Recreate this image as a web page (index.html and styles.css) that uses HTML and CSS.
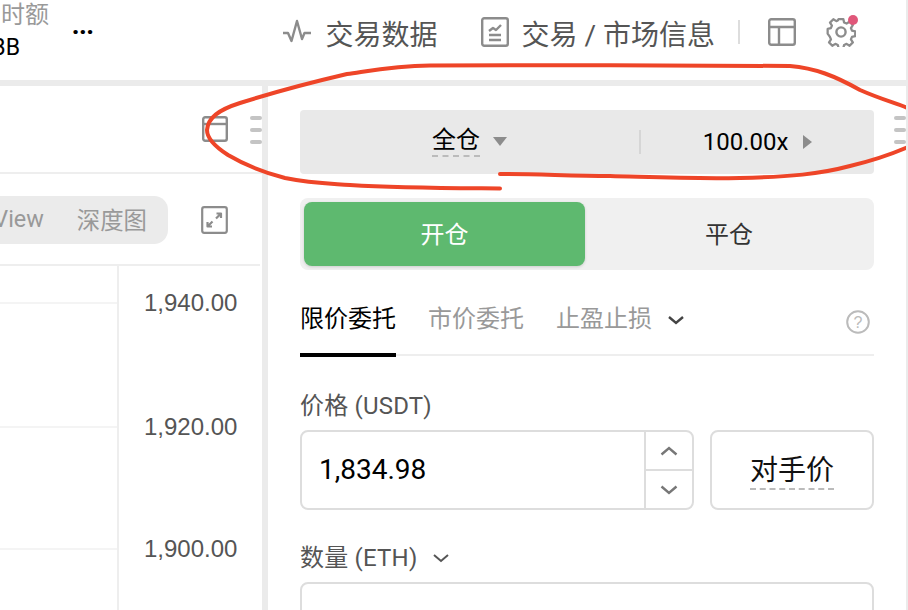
FILE: index.html
```html
<!DOCTYPE html>
<html lang="zh">
<head>
<meta charset="utf-8">
<title>交易</title>
<link rel="stylesheet" href="styles.css">
</head>
<body>
<div class="page">
  <header class="topbar">
    <div class="stat">
      <span class="stat-label">时额</span>
      <span class="stat-value">BB</span>
    </div>
    <span class="more">...</span>
    <nav class="tools">
      <svg class="icon pulse" viewBox="0 0 30 28"><path d="M1 15h5l3.5 8L15 3l5 18 2.5-6H29"/></svg>
      <span class="tool-text">交易数据</span>
      <svg class="icon report" viewBox="0 0 28 30"><rect x="1.2" y="1.2" width="25.6" height="27.6" rx="2"/><path d="M8 14l4-3 3 2 5-5M8 18h12M8 23h12"/></svg>
      <span class="tool-text">交易 / 市场信息</span>
      <span class="divider"></span>
      <svg class="icon layout" viewBox="0 0 28 28"><rect x="1.2" y="1.2" width="25.6" height="25.6" rx="2"/><path d="M1.2 9h25.6M11 9v18"/></svg>
      <span class="gear-wrap">
        <svg class="icon gear" viewBox="0 0 30 30"><path d="M12.5 2h5l.8 3.6 2.6 1.1 3.2-2 3.4 3.6-2 3.1 1.100 2.700 3.400.8v5l-3.400.8-1.100 2.700 2 3.100-3.400 3.600-3.200-2-2.600 1.100-.8 3.300h-5l-.8-3.300-2.600-1.100-3.200 2-3.400-3.600 2-3.100-1.100-2.700L1 17.300v-5l3.400-.8 1.100-2.700-2-3.100L7 2.100l3.200 2 1.500-.6z" transform="matrix(.95 0 0 .95 .7 .2)"/><circle cx="15" cy="15" r="4.600"/></svg>
        <span class="badge"></span>
      </span>
    </nav>
  </header>

  <main class="main">
    <section class="chart-panel">
      <div class="chart-head">
        <svg class="icon window" viewBox="0 0 26 26"><rect x="1.200" y="1.200" width="23.600" height="23.600" rx="2"/><path d="M1.200 8h23.600"/></svg>
        <div class="handle"><i></i><i></i><i></i></div>
      </div>
      <div class="chart-toolbar">
        <div class="view-pill">
          <span>View</span>
          <span>深度图</span>
        </div>
        <svg class="icon expand" viewBox="0 0 27 28"><rect x="1.200" y="1.200" width="24.600" height="25.600" rx="2"/><path d="M15.500 7.500h4.500v4.500M20 7.500l-5 5M6.500 16v4.500H11M6.500 20.500l5-5"/></svg>
      </div>
      <div class="chart-body">
        <div class="plot">
          <i class="grid-line"></i><i class="grid-line"></i><i class="grid-line"></i>
        </div>
        <div class="axis">
          <span>1,940.00</span>
          <span>1,920.00</span>
          <span>1,900.00</span>
        </div>
      </div>
    </section>

    <section class="order-panel">
      <div class="form">
        <div class="margin-bar">
          <div class="margin-cell first">
            <span class="dashed">全仓</span>
            <i class="tri-down"></i>
          </div>
          <span class="margin-sep"></span>
          <div class="margin-cell">
            <span>100.00x</span>
            <i class="tri-right"></i>
          </div>
        </div>

        <div class="segment">
          <button class="seg active">开仓</button>
          <button class="seg">平仓</button>
        </div>

        <div class="tabs">
          <span class="tab current">限价委托</span>
          <span class="tab">市价委托</span>
          <span class="tab">止盈止损</span>
          <svg class="tab-chev" viewBox="0 0 16 10"><path d="M1 2l7 6 7-6"/></svg>
          <svg class="help" viewBox="0 0 24 24"><circle cx="12" cy="12" r="10.800"/><text x="12" y="17.500" text-anchor="middle">?</text></svg>
        </div>

        <label class="field-label">价格 (USDT)</label>
        <div class="price-row">
          <div class="price-input">
            <span class="price-value">1,834.98</span>
            <div class="stepper">
              <span class="step"><svg viewBox="0 0 18 10"><path d="M1.500 8.500L9 2l7.500 6.500"/></svg></span>
              <span class="step"><svg viewBox="0 0 18 10"><path d="M1.500 1.500L9 8l7.500-6.500"/></svg></span>
            </div>
          </div>
          <button class="counter"><span class="dashed">对手价</span></button>
        </div>

        <label class="field-label qty-label">数量 (ETH)
          <svg class="label-chev" viewBox="0 0 16 10"><path d="M1 2l7 6 7-6"/></svg>
        </label>
        <div class="qty-input"></div>
      </div>
      <div class="handle right-handle"><i></i><i></i><i></i></div>
    </section>
  </main>

  <svg class="scribble" viewBox="0 0 908 610">
    <path d="M500 188.500C440 188 400 188 350 185C320 183 310 183 285 178C265 173 245 165 228 155C214 146 207 138 207 130C208 118 218 110 240 103C262 96 300 85 347 74C375 70 395 66 430 65.500C520 65 700 65 790 66C815 68 835 76 860 90C878 98 892 102 908 108"/>
    <path d="M500 174C540 174 570 176 610 176C650 177 690 179 740 178C790 177 820 174 850 166C875 160 892 154 908 147"/>
  </svg>
</div>
</body>
</html>
```
FILE: styles.css
```css
* { box-sizing: border-box; }
html, body { margin: 0; padding: 0; background: #fff; }
body { font-family: Roboto, "Noto Sans CJK SC", sans-serif; color: #000; }
.page { position: relative; width: 908px; height: 610px; overflow: hidden; border-right: 2px solid #ebebeb; background: #fff; }

.icon { fill: none; stroke: #8c8c8c; stroke-width: 2.4; stroke-linejoin: round; display: block; flex: none; }

/* top bar */
.topbar { display: flex; align-items: flex-start; height: 80px; }
.stat { width: 49px; height: 80px; overflow: hidden; display: flex; flex-direction: column; align-items: flex-end; flex: none; }
.stat-label { font-size: 24px; line-height: 28px; margin-top: 1px; color: #999; white-space: nowrap; }
.stat-value { font-size: 23px; line-height: 28px; margin-top: 5px; margin-right: 29px; white-space: nowrap; color: #000; }
.more { font-size: 24px; font-weight: 900; line-height: 20px; margin: 16px 0 0 23px; width: 20px; }
.tools { display: flex; align-items: center; margin-left: auto; height: 68px; padding-right: 50px; }
.tool-text { font-size: 28px; line-height: 40px; padding-top: 4px; color: #555; white-space: nowrap; }
.pulse { width: 30px; height: 28px; margin-right: 14px; margin-top: -4px; }
.report { width: 28px; height: 30px; margin: -4px 13px 0 43px; }
.divider { width: 2px; height: 24px; background: #ddd; margin: -4px 28px 0 23px; }
.layout { width: 28px; height: 28px; margin-right: 30px; margin-top: -4px; }
.gear-wrap { position: relative; display: block; width: 30px; height: 30px; margin-top: -4px; }
.gear { width: 30px; height: 30px; }
.badge { position: absolute; left: 22px; top: -2px; width: 10px; height: 10px; border-radius: 50%; background: #e0577a; }

/* main */
.main { display: flex; height: 530px; border-top: 6px solid #ebebeb; }
.chart-panel { width: 262px; flex: none; display: flex; flex-direction: column; }
.chart-head { height: 88px; border-bottom: 2px solid #eee; display: flex; align-items: flex-start; justify-content: flex-end; padding-top: 30px; }
.window { width: 26px; height: 26px; }
.handle { width: 12px; display: flex; flex-direction: column; gap: 8px; flex: none; }
.handle i { display: block; height: 4px; border-radius: 2px; background: #c4c4c4; }
.chart-head .handle { margin-left: 22px; }
.chart-toolbar { height: 92px; border-bottom: 2px solid #eee; margin-right: 2px; display: flex; align-items: flex-start; padding-top: 22px; }
.view-pill { width: 168px; height: 48px; flex: none; background: #ebebeb; border-radius: 0 14px 14px 0; display: flex; align-items: center; justify-content: flex-end; gap: 33px; padding: 0 21px 3px 0; font-size: 23.4px; color: #999; overflow: hidden; white-space: nowrap; }
.expand { width: 27px; height: 28px; margin: 10px 0 0 33px; stroke-width: 2.200; }
.chart-body { flex: 1; display: flex; min-height: 0; margin-right: 2px; }
.plot { width: 119px; flex: none; border-right: 2px solid #eee; padding-top: 36px; }
.grid-line { display: block; height: 2px; background: #f4f4f4; margin-bottom: 122px; }
.grid-line:nth-child(2) { margin-bottom: 120px; }
.axis { flex: 1; display: flex; flex-direction: column; padding: 23px 0 0 25px; font-family: "Liberation Sans", sans-serif; font-size: 24px; line-height: 28px; color: #555; }
.axis span { height: 28px; margin-bottom: 96px; }
.axis span:nth-child(2) { margin-bottom: 94px; }

/* order panel */
.order-panel { order: 2; flex: 1; display: flex; margin-left: 6px; padding: 24px 0 0 32px; }
.main::before { content: ""; order: 1; width: 6px; background: #ebebeb; flex: none; margin-right: -6px; }
.form { width: 574px; flex: none; }
.right-handle { margin: 6px 0 0 20px; }

.margin-bar { height: 64px; background: #e9e9e9; border-radius: 4px; display: flex; align-items: center; }
.margin-cell { flex: 1; display: flex; align-items: center; justify-content: center; font-size: 24px; color: #000; }
.margin-cell.first { flex: none; width: 339px; }
.margin-sep { width: 2px; height: 24px; background: #d6d6d6; flex: none; }
.dashed { border-bottom: 2px dashed #bbb; line-height: 1.100; padding-bottom: 1px; }
.tri-down { width: 0; height: 0; border-left: 7px solid transparent; border-right: 7px solid transparent; border-top: 9px solid #8c8c8c; margin-left: 13px; }
.tri-right { width: 0; height: 0; border-top: 7px solid transparent; border-bottom: 7px solid transparent; border-left: 9px solid #8c8c8c; margin-left: 15px; }

.segment { height: 72px; margin-top: 24px; background: #f0f0f0; border-radius: 8px; padding: 4px; display: flex; }
.seg { border: 0; background: transparent; font: inherit; font-size: 24px; color: #333; flex: 1; padding: 0 0 4px 3px; border-radius: 8px; }
.seg.active { flex: none; width: 281px; padding: 0 0 4px; background: #5eb96f; color: #fff; box-shadow: 0 1px 3px rgba(0,0,0,.15); }

.tabs { height: 86px; display: flex; align-items: flex-start; border-bottom: 2px solid #eee; gap: 32px; position: relative; }
.tab { font-size: 24px; line-height: 34px; margin-top: 32px; color: #999; white-space: nowrap; position: relative; height: 54px; }
.tab.current { color: #000; }
.tab.current::after { content: ""; position: absolute; left: 0; right: 0; bottom: -1px; height: 4px; background: #000; }
.tab-chev { width: 16px; height: 10px; margin: 45px 0 0 -16px; fill: none; stroke: #444; stroke-width: 2.400; }
.help { width: 24px; height: 24px; margin: 40px 4px 0 auto; fill: none; stroke: #bbb; stroke-width: 2; }
.help text { font-family: "Liberation Sans", sans-serif; font-size: 16px; fill: #bbb; stroke: none; }

.field-label { display: block; font-size: 24px; line-height: 34px; margin-top: 33px; color: #555; white-space: nowrap; letter-spacing: .2px; }
.price-row { display: flex; gap: 16px; height: 80px; margin-top: 7px; }
.price-input { width: 394px; flex: none; border: 2px solid #ddd; border-radius: 8px; display: flex; align-items: stretch; }
.price-value { flex: 1; font-size: 28px; line-height: 76px; padding-left: 17px; color: #000; }
.stepper { width: 48px; border-left: 2px solid #ddd; display: flex; flex-direction: column; }
.step { flex: 1; display: flex; align-items: center; justify-content: center; }
.step + .step { border-top: 2px solid #ddd; }
.step svg { width: 18px; height: 10px; fill: none; stroke: #777; stroke-width: 2.400; }
.counter { flex: 1; border: 2px solid #ddd; border-radius: 8px; background: #fff; font: inherit; font-size: 28px; color: #111; padding: 0; }
.qty-label { margin-top: 31px; display: flex; align-items: center; gap: 16px; }
.label-chev { width: 16px; height: 10px; fill: none; stroke: #555; stroke-width: 2; }
.qty-input { height: 80px; margin-top: 7px; border: 2px solid #ddd; border-radius: 8px; }

.scribble { position: absolute; left: 0; top: 0; width: 908px; height: 610px; pointer-events: none; }
.scribble path { fill: none; stroke: #ee4528; stroke-width: 4; stroke-linecap: round; stroke-linejoin: round; }
```
